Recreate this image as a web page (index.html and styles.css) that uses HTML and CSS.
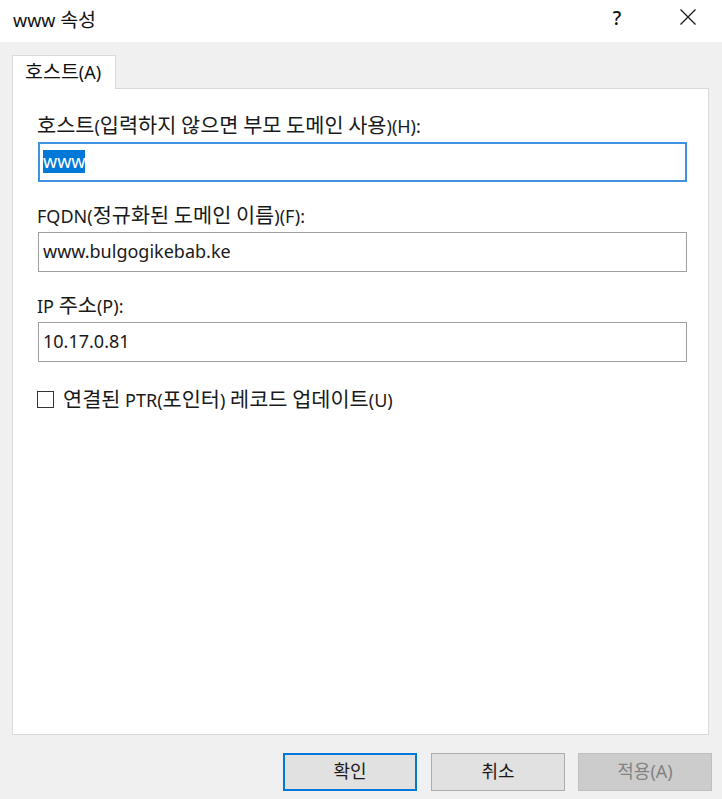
FILE: index.html
```html
<!DOCTYPE html>
<html lang="ko">
<head>
<meta charset="utf-8">
<title>www 속성</title>
<link rel="stylesheet" href="styles.css">
</head>
<body>
<div class="window">
  <div class="titlebar">
    <div class="title">www <span class="k2">속성</span></div>
    <div class="tb-help">?</div>
    <div class="tb-close">
      <svg width="18" height="18" viewBox="0 0 18 18"><path d="M1.5 1.5 L16.5 16.5 M16.5 1.5 L1.5 16.5" stroke="#1a1a1a" stroke-width="1.3" fill="none"/></svg>
    </div>
  </div>
  <div class="client">
    <div class="tabs">
      <div class="tab"><span class="k2">호스트</span>(A)</div>
      <div class="tab-rest"></div>
    </div>
    <div class="panel">
      <div class="field">
        <div class="label"><span class="k">호스트</span>(<span class="k">입력하지</span> <span class="k">않으면</span> <span class="k">부모</span> <span class="k">도메인</span> <span class="k">사용</span>)(H):</div>
        <div class="input focused"><span class="sel">www</span></div>
      </div>
      <div class="field">
        <div class="label">FQDN(<span class="k">정규화된</span> <span class="k">도메인</span> <span class="k">이름</span>)(F):</div>
        <div class="input">www.bulgogikebab.ke</div>
      </div>
      <div class="field">
        <div class="label">IP <span class="k">주소</span>(P):</div>
        <div class="input">10.17.0.81</div>
      </div>
      <div class="check">
        <span class="box"></span>
        <span class="check-label"><span class="k">연결된</span> PTR(<span class="k">포인터</span>) <span class="k">레코드</span> <span class="k">업데이트</span>(U)</span>
      </div>
    </div>
    <div class="buttons">
      <div class="btn default">확인</div>
      <div class="btn">취소</div>
      <div class="btn disabled">적용(A)</div>
    </div>
  </div>
</div>
</body>
</html>
```

FILE: styles.css
```css
html, body {
  margin: 0;
  padding: 0;
}
body {
  width: 722px;
  height: 799px;
  overflow: hidden;
  background: #f0f0f0;
  font-family: "Noto Sans", "Noto Sans CJK KR", sans-serif;
  color: #1a1a1a;
}
.window {
  width: 722px;
  height: 799px;
  display: flex;
  flex-direction: column;
}
.titlebar {
  height: 42px;
  background: #ffffff;
  display: flex;
  align-items: center;
}
.title {
  flex: 1;
  padding-left: 13px;
  font-size: 18px;
  margin-top: -6px;
  color: #111;
}
.tb-help {
  width: 20px;
  text-align: center;
  font-size: 19px;
  font-weight: 500;
  margin-right: 52px;
  margin-top: -6px;
  color: #111;
}
.tb-close {
  width: 18px;
  height: 18px;
  margin-right: 25px;
  margin-top: -8px;
  display: flex;
}
.client {
  flex: 1;
  display: flex;
  flex-direction: column;
  padding: 13px 13px 8px 12px;
}
.tabs {
  display: flex;
  height: 34px;
}
.tab {
  width: 104px;
  height: 34px;
  box-sizing: border-box;
  border: 1px solid #d9d9d9;
  border-bottom: none;
  background: #ffffff;
  font-size: 18px;
  line-height: 31px;
  padding-left: 12px;
  color: #111;
  position: relative;
  z-index: 1;
}
.k2 {
  font-size: 19.5px;
}
.tab-rest {
  flex: 1;
  border-bottom: 1px solid #d9d9d9;
}
.panel {
  height: 646px;
  background: #ffffff;
  border: 1px solid #d9d9d9;
  border-top: none;
  padding: 24px 21px 0 24px;
  box-sizing: border-box;
  display: flex;
  flex-direction: column;
}
.field {
  display: flex;
  flex-direction: column;
  margin-bottom: 21px;
}
.label {
  height: 24px;
  line-height: 24px;
  font-size: 18px;
  margin-bottom: 5px;
  color: #1a1a1a;
  white-space: nowrap;
}
.k {
  font-size: 20.8px;
}
.input {
  height: 40px;
  box-sizing: border-box;
  border: 1px solid #a0a0a0;
  font-size: 18px;
  line-height: 36px;
  padding-left: 4px;
  color: #1a1a1a;
  margin-left: 1px;
}
.input.focused {
  border: 2px solid #3e92e0;
  padding-left: 3px;
  line-height: 34px;
}
.sel {
  background: #0078d7;
  color: #ffffff;
  display: inline-block;
  line-height: 23px;
}
.check {
  display: flex;
  align-items: center;
  height: 24px;
  margin-top: 4px;
}
.box {
  width: 17px;
  height: 17px;
  box-sizing: border-box;
  border: 1px solid #333333;
  margin-left: 0;
  margin-right: 9px;
}
.check-label {
  font-size: 18px;
  line-height: 24px;
  white-space: nowrap;
}
.buttons {
  display: flex;
  justify-content: flex-end;
  gap: 14px;
  margin-top: 18px;
  margin-right: -3px;
}
.btn {
  width: 134px;
  height: 38px;
  box-sizing: border-box;
  border: 1px solid #adadad;
  background: #e1e1e1;
  font-size: 18px;
  text-align: center;
  line-height: 35px;
  color: #1a1a1a;
}
.btn.default {
  border: 2px solid #0078d7;
  line-height: 33px;
}
.btn.disabled {
  background: #cccccc;
  border-color: #bfbfbf;
  color: #838383;
  margin-left: -1px;
}
```
